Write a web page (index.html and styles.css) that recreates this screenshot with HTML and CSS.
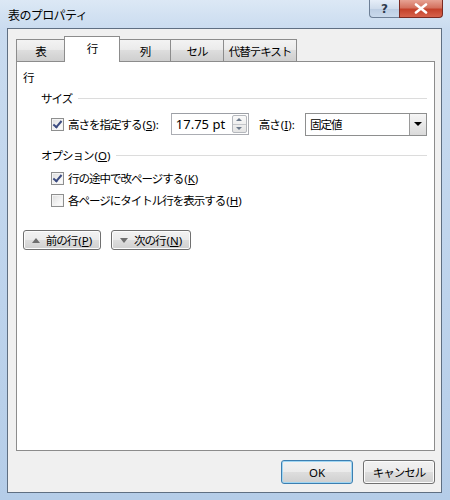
FILE: index.html
```html
<!DOCTYPE html>
<html lang="ja">
<head>
  <meta charset="UTF-8">
  <title>表のプロパティ</title>
  <link rel="stylesheet" href="styles.css">
</head>
<body>
  <div class="window">
    <div class="titlebar">
      <span class="title">表のプロパティ</span>
      <div class="caption-buttons">
        <div class="cap help">?</div>
        <div class="cap close">
          <svg width="14" height="11" viewBox="0 0 14 11">
            <path d="M2 1.5 L12 9.5 M12 1.5 L2 9.5" stroke="#fff" stroke-width="2.6" stroke-linecap="round"/>
          </svg>
        </div>
      </div>
    </div>

    <div class="client">
      <div class="tabs">
        <div class="tab t-table">表</div>
        <div class="tab t-row active">行</div>
        <div class="tab t-col">列</div>
        <div class="tab t-cell">セル</div>
        <div class="tab t-alt">代替テキスト</div>
      </div>

      <div class="panel">
        <div class="section-title">行</div>

        <div class="group-head"><span>サイズ</span></div>
        <div class="size-row">
          <label class="check">
            <span class="box checked"></span>
            <span>高さを指定する<span class="key">(<u>S</u>):</span></span>
          </label>
          <div class="spin">
            <span class="spin-value">17.75 pt</span>
            <div class="spin-btns">
              <span class="arrow up"></span>
              <span class="arrow down"></span>
            </div>
          </div>
          <span class="field-label">高さ<span class="key">(<u>I</u>):</span></span>
          <div class="select">
            <span class="select-value">固定値</span>
            <span class="drop"></span>
          </div>
        </div>

        <div class="group-head opt"><span>オプション<span class="key">(<u>O</u>)</span></span></div>
        <label class="check opt-row">
          <span class="box checked"></span>
          <span>行の途中で改ページする<span class="key">(<u>K</u>)</span></span>
        </label>
        <label class="check opt-row">
          <span class="box"></span>
          <span>各ページにタイトル行を表示する<span class="key">(<u>H</u>)</span></span>
        </label>

        <div class="nav-buttons">
          <div class="btn nav prev"><span class="tri up"></span><span>前の行<span class="key">(<u>P</u>)</span></span></div>
          <div class="btn nav next"><span class="tri down"></span><span>次の行<span class="key">(<u>N</u>)</span></span></div>
        </div>
      </div>

      <div class="footer">
        <div class="btn ok">OK</div>
        <div class="btn cancel">キャンセル</div>
      </div>
    </div>
  </div>
</body>
</html>
```

FILE: styles.css
```css
body {
  margin: 0;
  font-family: "Noto Sans", "Noto Sans CJK JP", sans-serif;
  font-size: 11.5px;
  letter-spacing: -1px;
  color: #000;
  background: #fff;
  white-space: nowrap;
}
.key {
  letter-spacing: 0;
  margin-left: 1px;
}
u {
  text-decoration-thickness: 1px;
  text-underline-offset: 1px;
}
.window {
  width: 450px;
  height: 500px;
  box-sizing: border-box;
  background: linear-gradient(180deg, #dce8f5 0px, #c9dbef 30px, #bdd3ec 60%, #b5cde8 100%);
  padding: 0 8px 7px 7px;
  display: flex;
  flex-direction: column;
}
.titlebar {
  height: 28px;
  display: flex;
  justify-content: space-between;
  align-items: flex-start;
  flex-shrink: 0;
}
.title {
  margin-top: 6px;
  margin-left: 1px;
  font-size: 12px;
  letter-spacing: -0.6px;
}
.caption-buttons {
  display: flex;
  margin-right: -1px;
}
.cap {
  height: 18px;
  border: 1px solid #6d7f96;
  border-top: none;
  box-sizing: border-box;
  display: flex;
  align-items: center;
  justify-content: center;
}
.help {
  width: 30px;
  border-radius: 0 0 0 4px;
  border-right: none;
  background: linear-gradient(180deg, #e6eef8 0%, #cfdcec 50%, #bccde2 51%, #c9d9ec 100%);
  color: #2f3b4c;
  font-family: "DejaVu Sans", sans-serif;
  font-size: 12px;
  font-weight: bold;
  letter-spacing: 0;
}
.close {
  width: 44px;
  border-radius: 0 0 4px 0;
  border-color: #7a2a22;
  background: linear-gradient(180deg, #e7a293 0%, #d4725f 45%, #c4412a 55%, #d7624c 100%);
}
.client {
  flex: 1;
  border: 1px solid #5f6f82;
  background: #f0f0f0;
  padding: 7px 6px 0 8px;
  display: flex;
  flex-direction: column;
}
.tabs {
  display: flex;
  align-items: flex-end;
  height: 25px;
  position: relative;
  z-index: 1;
}
.tab {
  height: 22px;
  box-sizing: border-box;
  border: 1px solid #8c8c8c;
  border-bottom: none;
  border-right: none;
  background: linear-gradient(180deg, #f3f3f3 0%, #ebebeb 45%, #dddddd 50%, #cfcfcf 100%);
  display: flex;
  align-items: center;
  justify-content: center;
}
.tab:last-child {
  border-right: 1px solid #8c8c8c;
}
.t-table { width: 48px; }
.t-row { width: 56px; }
.t-col { width: 50px; }
.t-cell { width: 53px; }
.t-alt { width: 74px; }
.tab.active {
  height: 26px;
  margin-bottom: -1px;
  background: #fff;
  border-right: 1px solid #8c8c8c;
  padding-bottom: 3px;
}
.tab.active + .tab {
  border-left: none;
}
.panel {
  height: 390px;
  width: 419px;
  box-sizing: border-box;
  background: #fff;
  border: 1px solid #8c8c8c;
  padding: 7px 7px 0 6px;
  display: flex;
  flex-direction: column;
}
.section-title {
  height: 18px;
  line-height: 18px;
}
.group-head {
  display: flex;
  align-items: center;
  height: 18px;
  margin-left: 18px;
  margin-top: 2px;
}
.group-head::after {
  content: "";
  flex: 1;
  height: 1px;
  background: #dcdcdc;
  margin-left: 6px;
}
.group-head.opt {
  margin-top: 11px;
}
.size-row {
  display: flex;
  align-items: center;
  height: 22px;
  margin-top: 6px;
  margin-left: 28px;
}
.check {
  display: flex;
  align-items: center;
  gap: 4px;
}
.size-row .check {
  width: 108px;
}
.box {
  width: 13px;
  height: 13px;
  flex-shrink: 0;
  box-sizing: border-box;
  border: 1px solid #8e8f8f;
  background: linear-gradient(135deg, #dcdcdc 0%, #f4f4f4 60%, #fff 100%);
  box-shadow: inset 0 0 0 1px #f4f4f4;
  position: relative;
}
.box.checked::after {
  content: "";
  position: absolute;
  left: 3px;
  top: 0px;
  width: 3px;
  height: 7px;
  border: solid #3b4b80;
  border-width: 0 2px 2px 0;
  transform: rotate(40deg);
}
.spin {
  margin-left: 12px;
  width: 78px;
  height: 22px;
  flex-shrink: 0;
  box-sizing: border-box;
  border: 1px solid #abadb3;
  border-top-color: #9c9fa5;
  display: flex;
  align-items: center;
  justify-content: space-between;
}
.spin-value {
  padding-left: 4px;
  font-size: 13px;
  letter-spacing: 0;
}
.spin-btns {
  width: 15px;
  height: 18px;
  margin-right: 1px;
  display: flex;
  flex-direction: column;
  border: 1px solid #b5b8bd;
  box-sizing: border-box;
  border-radius: 2px;
  background: linear-gradient(180deg, #fafafa, #e4e4e4);
}
.arrow {
  flex: 1;
  display: flex;
  align-items: center;
  justify-content: center;
}
.arrow.up {
  border-bottom: 1px solid #c4c6ca;
}
.arrow::before {
  content: "";
  border-left: 3px solid transparent;
  border-right: 3px solid transparent;
}
.arrow.up::before { border-bottom: 3px solid #6d7a8c; }
.arrow.down::before { border-top: 3px solid #6d7a8c; }
.field-label {
  margin-left: 10px;
  width: 39px;
}
.select {
  margin-left: 8px;
  width: 122px;
  height: 23px;
  flex-shrink: 0;
  box-sizing: border-box;
  border: 1px solid #8e8f8f;
  display: flex;
  align-items: center;
  justify-content: space-between;
}
.select-value {
  padding-left: 4px;
}
.drop {
  width: 17px;
  height: 21px;
  box-sizing: border-box;
  border-left: 1px solid #9a9a9a;
  background: linear-gradient(180deg, #f6f6f6, #dadada);
  display: flex;
  align-items: center;
  justify-content: center;
}
.drop::before {
  content: "";
  border-left: 4px solid transparent;
  border-right: 4px solid transparent;
  border-top: 4px solid #000;
}
.opt-row {
  margin-left: 28px;
  height: 18px;
  margin-top: 4px;
}
.group-head.opt + .opt-row {
  margin-top: 5px;
}
.nav-buttons {
  display: flex;
  gap: 10px;
  margin-top: 21px;
}
.btn {
  box-sizing: border-box;
  border: 1px solid #707070;
  border-radius: 3px;
  background: linear-gradient(180deg, #f2f2f2 0%, #ebebeb 48%, #dddddd 52%, #cfcfcf 100%);
  box-shadow: inset 0 0 0 1px #fcfcfc;
  display: flex;
  align-items: center;
  justify-content: center;
}
.nav {
  height: 20px;
  width: 78px;
  gap: 6px;
}
.nav.next {
  width: 80px;
}
.tri {
  border-left: 4px solid transparent;
  border-right: 4px solid transparent;
}
.tri.up { border-bottom: 5px solid #6e6e6e; }
.tri.down { border-top: 5px solid #6e6e6e; }
.footer {
  display: flex;
  justify-content: flex-end;
  gap: 10px;
  margin-top: 9px;
  width: 419px;
}
.footer .btn {
  height: 24px;
  width: 72px;
}
.ok {
  border-color: #3c7fb1;
  box-shadow: inset 0 0 0 1px #a0d6f3;
  letter-spacing: 0;
}
```
